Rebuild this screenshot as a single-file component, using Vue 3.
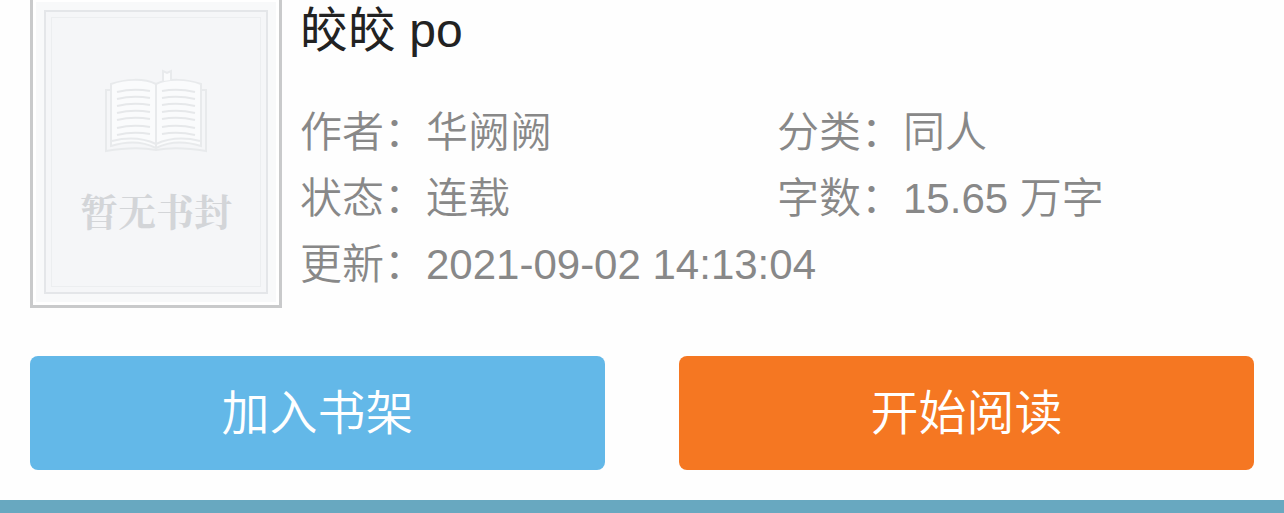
<template>
  <div class="book">
    <div class="detail">
      <div class="cover">
        <div class="cover-page">
          <div class="cover-frame">
            <svg class="cover-icon" viewBox="0 0 104 88" aria-hidden="true">
              <path
                class="sheet"
                d="M7 22H2v61c18-3 34-4 50-1 16-3 32-2 50 1V22h-5"
              />
              <path
                class="sheet white"
                d="M7 16c14-5 33-6 45 0 12-6 31-5 45 0v62c-16-5-31-5-45 2-14-7-29-7-45-2z"
              />
              <path class="sheet" d="M52 16v64M8 73c16-4 31-3 44 3 13-6 28-7 44-3" />
              <path class="sheet white" d="M59 13V3l4 2 4-2v9" />
              <path
                v-for="y in lines"
                :key="y"
                class="line"
                :d="`M13 ${y}q16 -4 33 -1M58 ${y - 1}q16 -3 33 1`"
              />
            </svg>
            <span class="cover-text">暂无书封</span>
          </div>
        </div>
      </div>
      <div class="info">
        <h1>{{ title }}</h1>
        <ul>
          <li v-for="item in meta" :key="item.label" :class="{ full: item.full }">
            {{ item.label }}：{{ item.value }}
          </li>
        </ul>
      </div>
    </div>
    <div class="actions">
      <button type="button" class="btn btn-shelf">加入书架</button>
      <button type="button" class="btn btn-read">开始阅读</button>
    </div>
    <div class="bar"></div>
  </div>
</template>

<script setup>
const title = "皎皎 po";

const meta = [
  { label: "作者", value: "华阙阙" },
  { label: "分类", value: "同人" },
  { label: "状态", value: "连载" },
  { label: "字数", value: "15.65 万字" },
  { label: "更新", value: "2021-09-02 14:13:04", full: true },
];

// строки текста на страницах книги
const lines = [24, 31, 38, 45, 52, 60, 67];
</script>

<style>
body {
  margin: 0;
  background: #fefefe;
}
</style>

<style scoped>
.book {
  font-family: "Liberation Sans", "Noto Sans CJK SC", sans-serif;
}

.detail {
  display: flex;
  gap: 18px;
  padding: 0 30px;
}

.cover {
  box-sizing: border-box;
  flex: none;
  width: 252px;
  padding: 2px 3px 3px;
  border: 3px solid #c9cacb;
  border-top: none;
  background: #fff;
}

.cover-page {
  padding: 8px;
  background: #f8f9fa;
}

.cover-frame {
  display: flex;
  flex-direction: column;
  align-items: center;
  gap: 26px;
  box-sizing: border-box;
  height: 284px;
  padding-top: 56px;
  border: 2px solid #e4e6e9;
  outline: 1px solid #eceef0;
  outline-offset: -8px;
  background: #f5f6f8;
}

.cover-icon {
  width: 104px;
  height: 88px;
}

.sheet {
  fill: none;
  stroke: #e8eaec;
  stroke-width: 2;
}

.white {
  fill: #fafbfc;
}

.line {
  fill: none;
  stroke: #e6e8ea;
  stroke-width: 2;
}

.cover-text {
  font-family: "Noto Serif CJK SC", "Noto Sans CJK SC", serif;
  font-size: 38px;
  font-weight: bold;
  line-height: 56px;
  color: #d3d5d8;
}

.info {
  flex: 1;
  min-width: 0;
}

h1 {
  margin: 0 0 38px;
  font-size: 48px;
  font-weight: normal;
  line-height: 62px;
  color: #222;
}

ul {
  display: flex;
  flex-wrap: wrap;
  margin: 0;
  padding: 0;
  list-style: none;
}

li {
  width: 50%;
  font-size: 42px;
  font-weight: 350;
  line-height: 66px;
  color: #888;
}

li.full {
  width: 100%;
}

.actions {
  display: flex;
  gap: 74px;
  padding: 48px 30px 30px;
}

.btn {
  flex: 1;
  height: 114px;
  padding: 0 0 8px;
  border: none;
  border-radius: 8px;
  font-family: inherit;
  font-size: 48px;
  font-weight: 350;
  color: #fff;
  cursor: pointer;
}

.btn-shelf {
  background: #63b8e8;
}

.btn-read {
  background: #f57722;
}

.bar {
  height: 13px;
  background: #68a8c0;
}
</style>
